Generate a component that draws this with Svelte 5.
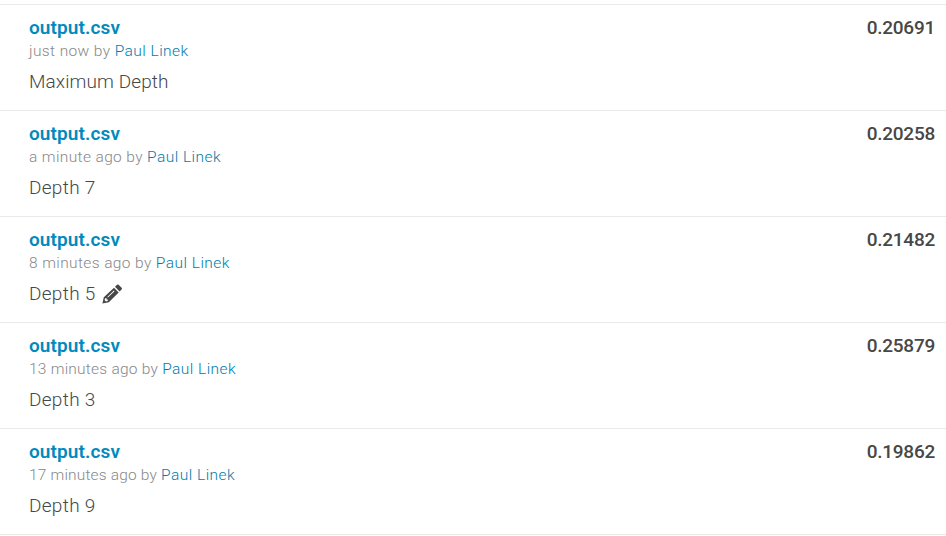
<script>
  const submissions = [
    { time: 'just now', tracking: 0.39, note: 'Maximum Depth', score: '0.20691' },
    { time: 'a minute ago', tracking: 0.37, note: 'Depth 7', score: '0.20258' },
    { time: '8 minutes ago', tracking: 0.39, note: 'Depth 5', score: '0.21482', editable: true },
    { time: '13 minutes ago', tracking: 0.23, note: 'Depth 3', score: '0.25879' },
    { time: '17 minutes ago', tracking: 0.17, note: 'Depth 9', score: '0.19862' },
  ];
</script>

<ul class="submissions">
  {#each submissions as item}
    <li class="row">
      <div class="details">
        <a class="file" href="#file">output.csv</a>
        <div class="meta"><span style="letter-spacing: {item.tracking}px">{item.time} by</span> <a class="author" href="#user">Paul Linek</a></div>
        <div class="note" class:short={item.note.length < 8}>
          <span>{item.note}</span>
          {#if item.editable}
            <svg class="pencil" viewBox="0 0 20 20" width="20" height="20" aria-hidden="true">
              <path fill="#474747" fill-rule="evenodd" d="M.4 19.5 1.8 13.2 12 3.7l4.7 4.7L6.8 18.2zM3.1 14.2l-.5 1.9 1.3 1.3 2-.6v-1.3H4.6v-1.3zM5.3 12.9l.6.6 6.6-6.3-.6-.6z"/>
              <path fill="#474747" d="m13 2.8 2-2q.8-.8 1.6 0l3 3q.8.8 0 1.6l-2 2z"/>
            </svg>
          {/if}
        </div>
      </div>
      <span class="score">{item.score}</span>
    </li>
  {/each}
</ul>

<style>
  :global(body) {
    margin: 0;
    background: #fff;
    overflow: hidden;
  }
  .submissions {
    list-style: none;
    margin: 0;
    padding: 4px 0 0;
    border-bottom: 1px solid #e9e9e9;
    font-family: Roboto, "Liberation Sans", sans-serif;
    color: #474747;
  }
  .row {
    display: flex;
    justify-content: space-between;
    align-items: flex-start;
    box-sizing: border-box;
    height: 106px;
    padding: 11px 11px 0 29px;
    border-top: 1px solid #e9e9e9;
  }
  .details {
    display: flex;
    flex-direction: column;
    align-items: flex-start;
  }
  a {
    color: #008abc;
    text-decoration: none;
  }
  .file,
  .score {
    font-size: 19px;
    line-height: 23px;
    font-weight: 600;
  }
  .file {
    letter-spacing: 0.1px;
  }
  .score {
    font-weight: 550;
    letter-spacing: -0.25px;
  }
  .meta {
    margin-top: 1px;
    font-size: 15.5px;
    line-height: 22px;
    font-weight: 300;
    letter-spacing: 0.3px;
    color: #888;
    white-space: nowrap;
  }
  .author {
    color: #007cab;
    font-weight: 350;
    letter-spacing: 0.47px;
  }
  .note {
    display: flex;
    align-items: center;
    gap: 6px;
    margin-top: 7px;
    height: 26px;
    font-size: 19px;
    line-height: 26px;
    font-weight: 330;
    letter-spacing: 0.1px;
  }
  .short {
    letter-spacing: 0.3px;
  }
  .pencil {
    display: block;
  }
</style>
